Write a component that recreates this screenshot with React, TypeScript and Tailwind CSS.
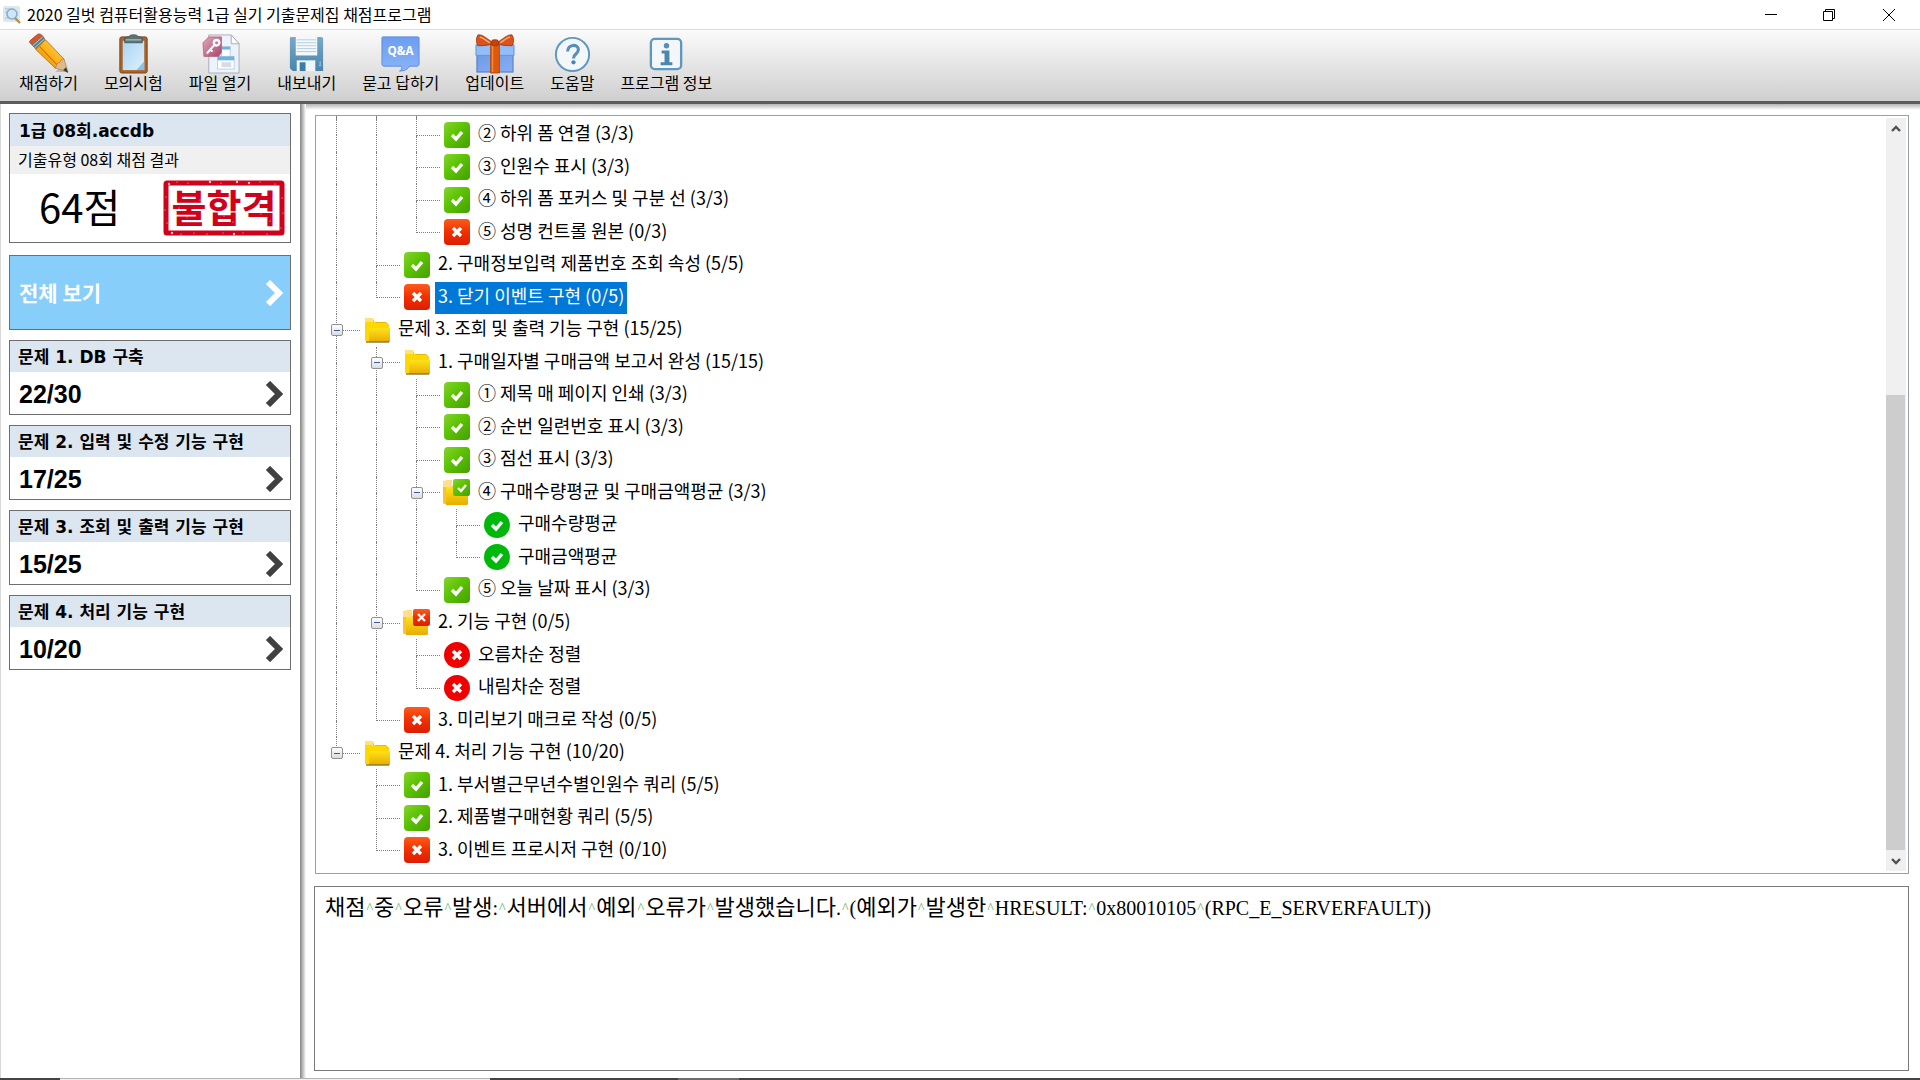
import React, { useState } from "react";
import clsx from "clsx";

type Guide = "line" | "tee" | "end" | "blank";
type IconKind =
  | "pass"
  | "fail"
  | "folder"
  | "folderPass"
  | "folderFail"
  | "roundPass"
  | "roundFail";

interface TreeRow {
  guides: Guide[];
  icon: IconKind;
  label: string;
}

const treeRows: TreeRow[] = [
  { guides: ["line", "line", "tee"], icon: "pass", label: "② 하위 폼 연결 (3/3)" },
  { guides: ["line", "line", "tee"], icon: "pass", label: "③ 인원수 표시 (3/3)" },
  { guides: ["line", "line", "tee"], icon: "pass", label: "④ 하위 폼 포커스 및 구분 선 (3/3)" },
  { guides: ["line", "line", "end"], icon: "fail", label: "⑤ 성명 컨트롤 원본 (0/3)" },
  { guides: ["line", "tee"], icon: "pass", label: "2. 구매정보입력 제품번호 조회 속성 (5/5)" },
  { guides: ["line", "end"], icon: "fail", label: "3. 닫기 이벤트 구현 (0/5)" },
  { guides: ["tee"], icon: "folder", label: "문제 3. 조회 및 출력 기능 구현 (15/25)" },
  { guides: ["line", "tee"], icon: "folder", label: "1. 구매일자별 구매금액 보고서 완성 (15/15)" },
  { guides: ["line", "line", "tee"], icon: "pass", label: "① 제목 매 페이지 인쇄 (3/3)" },
  { guides: ["line", "line", "tee"], icon: "pass", label: "② 순번 일련번호 표시 (3/3)" },
  { guides: ["line", "line", "tee"], icon: "pass", label: "③ 점선 표시 (3/3)" },
  { guides: ["line", "line", "tee"], icon: "folderPass", label: "④ 구매수량평균 및 구매금액평균 (3/3)" },
  { guides: ["line", "line", "line", "tee"], icon: "roundPass", label: "구매수량평균" },
  { guides: ["line", "line", "line", "end"], icon: "roundPass", label: "구매금액평균" },
  { guides: ["line", "line", "end"], icon: "pass", label: "⑤ 오늘 날짜 표시 (3/3)" },
  { guides: ["line", "tee"], icon: "folderFail", label: "2. 기능 구현 (0/5)" },
  { guides: ["line", "line", "tee"], icon: "roundFail", label: "오름차순 정렬" },
  { guides: ["line", "line", "end"], icon: "roundFail", label: "내림차순 정렬" },
  { guides: ["line", "end"], icon: "fail", label: "3. 미리보기 매크로 작성 (0/5)" },
  { guides: ["end"], icon: "folder", label: "문제 4. 처리 기능 구현 (10/20)" },
  { guides: ["blank", "tee"], icon: "pass", label: "1. 부서별근무년수별인원수 쿼리 (5/5)" },
  { guides: ["blank", "tee"], icon: "pass", label: "2. 제품별구매현황 쿼리 (5/5)" },
  { guides: ["blank", "end"], icon: "fail", label: "3. 이벤트 프로시저 구현 (0/10)" },
];

const sections = [
  { title: "문제 1. DB 구축", score: "22/30" },
  { title: "문제 2. 입력 및 수정 기능 구현", score: "17/25" },
  { title: "문제 3. 조회 및 출력 기능 구현", score: "15/25" },
  { title: "문제 4. 처리 기능 구현", score: "10/20" },
];

const errorMessage =
  "채점 중 오류 발생: 서버에서 예외 오류가 발생했습니다. (예외가 발생한 HRESULT: 0x80010105 (RPC_E_SERVERFAULT))";

/* ---------- toolbar icons ---------- */

const PencilIcon = () => (
  <svg viewBox="0 0 42 42" className="size-[41px]">
    <defs>
      <linearGradient id="pencilBody" x1="0" y1="1" x2="1" y2="0">
        <stop offset="0" stopColor="#e07c00" />
        <stop offset=".5" stopColor="#ffb21a" />
        <stop offset="1" stopColor="#ffd76a" />
      </linearGradient>
    </defs>
    <path d="M28 40 34 34l7 6z" fill="#000" opacity=".18" />
    <path d="M2 8 9 2c2-2 4-1 6 1l2 3-10 9-4-4c-1-1-2-2-1-3z" fill="#d9532c" stroke="#a93a1a" strokeWidth=".8" />
    <path d="m4 12 10-9 4 4L8 17z" fill="#5f7f86" />
    <path d="m5 13 10-9M7 15l10-9" stroke="#b9cdd0" strokeWidth="1" />
    <path d="M8 17 18 7l19 20-3 6-6 3z" fill="url(#pencilBody)" stroke="#b56a00" strokeWidth=".8" />
    <path d="m12 14 20 21" stroke="#c97a00" strokeWidth="1.2" />
    <path d="m28 36 2-5 3-1 1-3 3 0 4 13z" fill="#dfb98c" stroke="#9c7346" strokeWidth=".6" />
    <path d="m36 38 3-3 2 6z" fill="#3a3a42" />
  </svg>
);

const ClipboardIcon = () => (
  <svg viewBox="0 0 42 42" className="size-[41px]">
    <defs>
      <linearGradient id="clipPaper" x1="0" y1="0" x2="1" y2="1">
        <stop offset="0" stopColor="#a9d4f5" />
        <stop offset="1" stopColor="#def0fc" />
      </linearGradient>
    </defs>
    <rect x="7" y="4" width="28" height="37" rx="2" fill="#a9642a" stroke="#7c451a" />
    <rect x="10" y="8" width="22" height="30" fill="url(#clipPaper)" />
    <path d="M32 29v9h-8z" fill="#8fbfe4" />
    <path d="M12 10V6c0-1 1-2 2-2h2c1-3 9-3 10 0h2c1 0 2 1 2 2v4z" fill="#5b7376" stroke="#3d5254" strokeWidth=".8" />
    <path d="M13 7h16" stroke="#9db4b6" strokeWidth="1.5" />
  </svg>
);

const AccessFileIcon = () => (
  <svg viewBox="0 0 42 42" className="size-[41px]">
    <defs>
      <linearGradient id="accessTile" x1="0" y1="0" x2="1" y2="1">
        <stop offset="0" stopColor="#e3a9ba" />
        <stop offset="1" stopColor="#a8456a" />
      </linearGradient>
    </defs>
    <path d="M9 2h23l8 9v30H9z" fill="#eef2fb" stroke="#a9aebb" />
    <path d="M32 2v9h8z" fill="#fff" stroke="#a9aebb" />
    <rect x="22" y="14" width="9" height="10" fill="#fff" stroke="#b9d2e8" />
    <rect x="22" y="14" width="9" height="3" fill="#6fb4df" />
    <rect x="18" y="24" width="17" height="13" fill="#fff" stroke="#b9d2e8" />
    <rect x="18" y="24" width="17" height="4" fill="#6fb4df" />
    <rect x="22" y="30" width="10" height="5" fill="#d9dbe2" />
    <path d="M3 10 9 4h13v16l-3 4H4z" fill="url(#accessTile)" stroke="#b4607c" strokeWidth=".8" />
    <circle cx="17" cy="10" r="2.8" fill="none" stroke="#fff" strokeWidth="2.4" />
    <path d="m15 12-8 9M10 17l3 2" stroke="#fff" strokeWidth="2" fill="none" />
  </svg>
);

const FloppyIcon = () => (
  <svg viewBox="0 0 42 42" className="size-[41px]">
    <defs>
      <linearGradient id="floppyBody" x1="0" y1="0" x2="0" y2="1">
        <stop offset="0" stopColor="#7aa9c9" />
        <stop offset="1" stopColor="#4884ac" />
      </linearGradient>
    </defs>
    <path d="M5 4h31c1 0 2 1 2 2v33H7l-3-3V6c0-1 0-2 1-2z" fill="url(#floppyBody)" />
    <rect x="10" y="4" width="22" height="19" fill="#f3f8fb" />
    <path d="M11 7h20M11 10h20M11 13h20M11 16h20M11 19h20" stroke="#b4cddd" strokeWidth="1" />
    <rect x="11" y="28" width="19" height="11" fill="#eff6fa" />
    <rect x="14" y="30" width="6" height="9" fill="#3f7ba3" />
    <path d="M35 29v5m-1-1 1 1 1-1" stroke="#a8cbe0" />
  </svg>
);

const QnaIcon = () => (
  <svg viewBox="0 0 42 42" className="size-[41px]">
    <defs>
      <linearGradient id="qnaBubble" x1="0" y1="0" x2="0" y2="1">
        <stop offset="0" stopColor="#6c9df0" />
        <stop offset="1" stopColor="#8ab4f8" />
      </linearGradient>
    </defs>
    <path d="M3 4h36c1 0 1 1 1 1v27c0 1-1 2-2 2h-8c-1 3-5 5-10 5 2-1 3-3 2-5H4c-1 0-2-1-2-2V5c0-1 1-1 1-1z" fill="url(#qnaBubble)" stroke="#5c8ce0" />
    <text x="21" y="23" textAnchor="middle" fontSize="12" fontWeight="700" fontFamily="'Open Sans', sans-serif" fill="#fff">
      Q&amp;A
    </text>
  </svg>
);

const GiftIcon = () => (
  <svg viewBox="0 0 42 42" className="size-[41px]">
    <defs>
      <linearGradient id="giftBox" x1="0" y1="0" x2="1" y2="1">
        <stop offset="0" stopColor="#6f9be6" />
        <stop offset="1" stopColor="#86aef2" />
      </linearGradient>
    </defs>
    <rect x="3" y="22" width="37" height="18" fill="url(#giftBox)" stroke="#4f76c2" />
    <path d="M2 12h39v11H2z" fill="#92bdf8" stroke="#6a93d8" />
    <path d="M17 12h9v29h-9z" fill="#e0580a" stroke="#ad3f05" strokeWidth=".8" />
    <path d="M19 12v28" stroke="#f58a3c" strokeWidth="1.5" />
    <path d="M20 10C14 7 9 1 4 2c-2 3-2 8 0 11 6 0 11 0 16-3zM23 10c6-3 11-9 16-8 2 3 2 8 0 11-6 0-11 0-16-3z" fill="#d9531a" stroke="#96330a" strokeWidth=".8" />
    <path d="M6 4c4 1 7 4 10 6M37 4c-4 1-7 4-10 6" stroke="#f8a878" strokeWidth="1.6" fill="none" />
    <rect x="18" y="7" width="7" height="6" rx="2" fill="#c6430c" stroke="#96330a" strokeWidth=".8" />
  </svg>
);

const HelpIcon = () => (
  <svg viewBox="0 0 42 42" className="size-[41px]">
    <circle cx="21" cy="22" r="17" fill="#f3f7fa" stroke="#5f97bf" strokeWidth="2" />
    <path d="M16 19c0-8 11-8 11-2 0 5-5 4-5 9" fill="none" stroke="#5690b8" strokeWidth="3.2" />
    <circle cx="22" cy="30" r="2.2" fill="#4a86b0" />
  </svg>
);

const InfoIcon = () => (
  <svg viewBox="0 0 42 42" className="size-[41px]">
    <rect x="5" y="6" width="31" height="31" rx="4" fill="#f3f7fa" stroke="#5f97bf" strokeWidth="2.4" />
    <circle cx="21" cy="13" r="2.8" fill="#5690b8" />
    <path d="M16 18h8v12h3v3H15v-3h4v-9h-3z" fill="#4a86b0" />
  </svg>
);

const toolbarItems = [
  { label: "채점하기", Icon: PencilIcon },
  { label: "모의시험", Icon: ClipboardIcon },
  { label: "파일 열기", Icon: AccessFileIcon },
  { label: "내보내기", Icon: FloppyIcon },
  { label: "묻고 답하기", Icon: QnaIcon },
  { label: "업데이트", Icon: GiftIcon },
  { label: "도움말", Icon: HelpIcon },
  { label: "프로그램 정보", Icon: InfoIcon },
];

/* ---------- tree ---------- */

const CHECK = "m8 13 4 4 6-7";
const CROSS = "m9 9 8 8m0-8-8 8";

function StatusIcon({ kind }: { kind: IconKind }) {
  const passed = kind === "pass" || kind === "folderPass" || kind === "roundPass";
  const mark = passed ? CHECK : CROSS;

  if (kind === "pass" || kind === "fail") {
    return (
      <svg viewBox="0 0 26 26" className="size-[26px]">
        <rect width="26" height="26" rx="4" fill={passed ? "url(#greenTile)" : "url(#redTile)"} />
        <path d={mark} fill="none" stroke="#fff" strokeWidth="3.4" />
      </svg>
    );
  }
  if (kind === "roundPass" || kind === "roundFail") {
    return (
      <svg viewBox="0 0 26 26" className="size-[26px]">
        <circle cx="13" cy="13" r="13" fill={passed ? "#00b80a" : "#f00000"} />
        <path d={mark} fill="none" stroke="#fff" strokeWidth="3.4" />
      </svg>
    );
  }
  if (kind === "folder") {
    return (
      <svg viewBox="0 0 26 26" className="size-[26px]">
        <path d="M1 24V1h8l1 4h12l3 3v16z" fill="#e9b800" />
        <path d="M1 6V1h8v5z" fill="#ffe27a" />
        <path d="M1 24V5h10l1 1h10l3 3v3H5v13z" fill="#ffd800" />
        <path d="M5 11h21v14H5z" fill="url(#folderFront)" />
        <path d="M2 25h23" stroke="#8a7434" strokeWidth="1.4" />
      </svg>
    );
  }
  return (
    <svg viewBox="0 0 26 26" className="-ml-px size-[26px] overflow-visible">
      <path d="M0 24V2l9-1v6h16v18H1z" fill="#f5c435" />
      <path d="M0 8V2l9-1v7z" fill="#ffe08a" />
      <path d="M3 8h8v9h14v8l-1 1H3z" fill="url(#folderFront)" />
      <rect x="10" y="0" width="17" height="17" rx="2" fill={passed ? "url(#greenTile)" : "url(#redTile)"} />
      <path d={passed ? "m15 9 3 3 5-6" : "m15 5 7 7m0-7-7 7"} fill="none" stroke="#fff" strokeWidth="2.4" />
    </svg>
  );
}

// Paints shared by every icon of the tree
const TreePaints = () => (
  <svg width="0" height="0" className="absolute" aria-hidden="true">
    <defs>
      <linearGradient id="greenTile" x1="0" y1="0" x2="1" y2="1">
        <stop offset="0" stopColor="#86d330" />
        <stop offset=".4" stopColor="#5fc505" />
        <stop offset="1" stopColor="#43a000" />
      </linearGradient>
      <linearGradient id="redTile" x1="0" y1="0" x2="0" y2="1">
        <stop offset="0" stopColor="#ff5a1c" />
        <stop offset=".5" stopColor="#f03000" />
        <stop offset="1" stopColor="#dc1e00" />
      </linearGradient>
      <linearGradient id="folderFront" x1="0" y1="0" x2="0" y2="1">
        <stop offset="0" stopColor="#ffe11a" />
        <stop offset="1" stopColor="#e8ac00" />
      </linearGradient>
    </defs>
  </svg>
);

function GuideCell({ guide, connector }: { guide: Guide; connector?: boolean }) {
  return (
    <span className={clsx("flex shrink-0 flex-col self-stretch pl-[19px]", connector ? "w-[43px]" : "w-[40px]")}>
      <span
        className={clsx(
          "flex-1 border-dotted border-[#808080]",
          guide !== "blank" && "border-l",
          (guide === "tee" || guide === "end") && "border-b"
        )}
      />
      <span className={clsx("flex-1 border-dotted border-[#808080]", (guide === "line" || guide === "tee") && "border-l")} />
    </span>
  );
}

function TreeItem({ row, selected, onSelect }: { row: TreeRow; selected: boolean; onSelect: () => void }) {
  const isFolder = row.icon.startsWith("folder");
  const last = row.guides.length - 1;

  return (
    <li role="treeitem" aria-selected={selected} className="flex min-h-0 flex-1 items-center">
      {row.guides.slice(0, last).map((guide, i) => (
        <GuideCell key={i} guide={guide} />
      ))}
      <span className="relative flex self-stretch">
        <GuideCell guide={row.guides[last]} connector />
        {isFolder && (
          <button
            aria-label="접기"
            className="absolute top-1/2 left-[14px] flex size-[12px] -translate-y-1/2 items-center justify-center rounded-xs border border-[#919191] bg-linear-to-b from-white to-[#dcdcdc]"
          >
            <span className="h-px w-[6px] bg-[#3b5ba9]" />
          </button>
        )}
      </span>
      <span className="w-[35px] shrink-0 pb-px pl-1">
        <StatusIcon kind={row.icon} />
      </span>
      <button
        onClick={onSelect}
        className={clsx(
          "flex items-center self-stretch px-[3px] pb-[6px] text-[18px] leading-6 whitespace-nowrap",
          selected ? "bg-[#0078d7] text-white" : "text-black"
        )}
      >
        {row.label}
      </button>
    </li>
  );
}

const ScrollArrow = ({ d }: { d: string }) => (
  <svg viewBox="0 0 10 8" className="h-[8px] w-[10px]">
    <path d={d} fill="none" stroke="#505050" strokeWidth="2.4" />
  </svg>
);

function ResultTree() {
  const [selected, setSelected] = useState(5);

  return (
    <div className="ml-px flex min-h-0 flex-1 border border-[#9a9fa8] bg-white">
      <TreePaints />
      <div className="flex flex-1 flex-col pb-[6px] pl-px">
        <div className="flex h-[3px]" aria-hidden="true">
          <GuideCell guide="line" />
          <GuideCell guide="line" />
          <GuideCell guide="line" />
        </div>
        <ul role="tree" className="flex min-h-0 flex-1 flex-col">
          {treeRows.map((row, i) => (
            <TreeItem key={i} row={row} selected={i === selected} onSelect={() => setSelected(i)} />
          ))}
        </ul>
      </div>
      <div className="my-[2px] mr-[2px] flex w-[20px] flex-col bg-[#f0f0f0]">
        <button aria-label="위로" className="flex h-[21px] items-center justify-center">
          <ScrollArrow d="m1 6 4-4 4 4" />
        </button>
        <div className="flex flex-1 flex-col justify-end">
          <div className="mr-px h-[64%] bg-[#cdcdcd]" />
        </div>
        <button aria-label="아래로" className="flex h-[21px] items-center justify-center">
          <ScrollArrow d="m1 2 4 4 4-4" />
        </button>
      </div>
    </div>
  );
}

/* ---------- sidebar ---------- */

const Chevron = () => (
  <svg viewBox="0 0 18 26" className="h-[26px] w-[18px]">
    <path d="m3 2 11 11L3 24" fill="none" stroke="currentColor" strokeWidth="6" />
  </svg>
);

// Worn spots in the ink of the stamp
const specks = [
  [6, 4, 2], [14, 2, 1], [25, 3, 1], [47, 2, 2], [58, 3, 1], [74, 2, 2], [86, 3, 2], [97, 2, 1], [112, 4, 1],
  [119, 18, 1], [120, 33, 1], [118, 48, 1], [3, 17, 1], [2, 30, 1], [4, 43, 1], [9, 53, 2], [18, 54, 1],
  [31, 53, 1], [44, 54, 1], [60, 53, 1], [71, 54, 2], [80, 53, 1], [104, 54, 1], [16, 28, 1], [24, 37, 1],
  [33, 41, 1], [40, 31, 1], [37, 20, 1], [52, 24, 1], [61, 36, 1], [70, 42, 1], [66, 19, 1], [91, 22, 1],
  [98, 34, 1], [107, 41, 1], [110, 19, 1], [22, 17, 1], [77, 28, 1],
];

const FailStamp = () => (
  <svg viewBox="0 0 122 56" className="h-[56px] w-[122px] overflow-visible">
    <rect x="3" y="3" width="116" height="50" rx="1" fill="none" stroke="#d0021b" strokeWidth="5" />
    <text
      x="61"
      y="42"
      textAnchor="middle"
      fontSize="38"
      fontWeight="700"
      fontFamily="'Noto Sans CJK KR', sans-serif"
      fill="#d0021b"
    >
      불합격
    </text>
    {specks.map(([x, y, r]) => (
      <circle key={`${x}-${y}`} cx={x} cy={y} r={r * 0.6} fill="#fff" opacity=".75" />
    ))}
  </svg>
);

function SectionCard({ title, score }: { title: string; score: string }) {
  return (
    <button className="flex h-[75px] w-full flex-col border border-[#6e6e6e] bg-white text-left">
      <span className="flex h-[31px] w-full items-center bg-[#dce6f0] px-2 font-['DejaVu_Sans','Noto_Sans_CJK_KR',sans-serif] text-[17px] leading-6 font-bold">
        {title}
      </span>
      <span className="flex w-full flex-1 items-center justify-between pt-px pr-[7px] pl-[9px]">
        <span className="font-['Liberation_Sans',sans-serif] text-[25px] leading-8 font-bold">{score}</span>
        <span className="text-[#404040]">
          <Chevron />
        </span>
      </span>
    </button>
  );
}

function Sidebar() {
  return (
    <aside className="w-[300px] shrink-0 border-l border-[#d8d8d8] bg-white pt-[9px] pr-[9px] pl-2">
      <div className="h-[130px] border border-[#6e6e6e]">
        <h2 className="flex h-[32px] items-center bg-[#dce6f0] px-[9px] pt-[2px] font-['DejaVu_Sans','Noto_Sans_CJK_KR',sans-serif] text-[17px] leading-6 font-bold">
          1급 08회.accdb
        </h2>
        <p className="flex h-[28px] items-center bg-[#f0f0f0] px-2 pb-[2px] text-base">기출유형 08회 채점 결과</p>
        <div className="flex h-[68px] items-center justify-between pr-[5px] pl-[29px]">
          <span className="pb-1 text-[40px] leading-10">64점</span>
          <FailStamp />
        </div>
      </div>
      <div className="mt-3 flex flex-col gap-[10px]">
        <button className="flex h-[75px] w-full items-center justify-between border border-[#6e6e6e] bg-[#87cefa] pr-[7px] pl-[9px] text-[21px] font-bold text-white">
          전체 보기
          <Chevron />
        </button>
        {sections.map((section) => (
          <SectionCard key={section.title} {...section} />
        ))}
      </div>
    </aside>
  );
}

/* ---------- window ---------- */

function TitleBar() {
  return (
    <header className="flex h-[29px] shrink-0 items-center bg-white">
      <svg viewBox="0 0 20 20" className="ml-[2px] size-[20px]">
        <rect x="1" y="1" width="17" height="16" rx="2" fill="#dfe6ec" />
        <path d="M3 4h9M3 7h5M3 13h5" stroke="#a9c3b4" />
        <circle cx="10" cy="9" r="5" fill="#cfe6fa" stroke="#7fb0dc" strokeWidth="1.6" />
        <path d="m13 13 5 5" stroke="#b98d4c" strokeWidth="2.4" />
      </svg>
      <h1 className="ml-[5px] pb-[2px] text-base">2020 길벗 컴퓨터활용능력 1급 실기 기출문제집 채점프로그램</h1>
      <div className="ml-auto flex h-full">
        <button aria-label="최소화" className="flex w-[58px] items-center justify-center">
          <svg viewBox="0 0 12 12" className="size-[12px]">
            <path d="M0 5.5h12" stroke="#000" />
          </svg>
        </button>
        <button aria-label="이전 크기로" className="flex w-[58px] items-center justify-center">
          <svg viewBox="0 0 12 12" className="size-[12px]">
            <path d="M.5 2.5h9v9h-9zM2.5 2V.5h9v9H10" fill="none" stroke="#000" />
          </svg>
        </button>
        <button aria-label="닫기" className="flex w-[62px] items-center justify-center">
          <svg viewBox="0 0 12 12" className="size-[12px]">
            <path d="m0 0 12 12m0-12L0 12" stroke="#000" />
          </svg>
        </button>
      </div>
    </header>
  );
}

function Toolbar() {
  return (
    <nav className="flex h-[75px] shrink-0 items-start gap-[26px] border-t border-b-3 border-t-[#dcdcdc] border-b-[#5c5c5c] bg-linear-to-b from-[#fbfbfb] to-[#cfcfcf] pt-[3px] pl-[19px]">
      {toolbarItems.map(({ label, Icon }) => (
        <button key={label} className="flex flex-col items-center text-base leading-4">
          <Icon />
          {label}
        </button>
      ))}
    </nav>
  );
}

// Hangul runs are set larger than the Latin text around them
const renderWord = (word: string) =>
  word.split(/([가-힣]+)/).map((part, i) =>
    i % 2 ? (
      <span key={i} className="text-[22px]">
        {part}
      </span>
    ) : (
      part
    )
  );

function MessageLog() {
  return (
    <output className="block h-[185px] shrink-0 border border-[#7a7a7a] bg-white px-[10px] py-[7px] font-['Liberation_Serif','Noto_Sans_CJK_KR',serif] text-[20px] leading-7">
      {errorMessage.split(" ").map((word, i) => (
        <React.Fragment key={i}>
          {i > 0 && <span className="px-px align-[2px] text-[14px] leading-4 text-[#4caf50]">^</span>}
          {renderWord(word)}
        </React.Fragment>
      ))}
    </output>
  );
}

export default function App() {
  return (
    <div className="flex h-screen flex-col overflow-hidden bg-white font-['Noto_Sans_CJK_KR',sans-serif] text-black">
      <TitleBar />
      <Toolbar />
      <main className="flex min-h-0 flex-1">
        <Sidebar />
        <div className="w-[6px] shrink-0 bg-linear-to-r from-[#858585] to-white" />
        <section className="flex min-w-0 flex-1 flex-col gap-3 bg-[linear-gradient(#b5b5b5,#ffffff_6px)] pt-[11px] pr-[11px] pb-[7px] pl-2">
          <ResultTree />
          <MessageLog />
        </section>
      </main>
      {/* Edge of the desktop taskbar */}
      <footer className="flex h-[2px] shrink-0 bg-[#444444]">
        <div className="ml-[60px] w-[430px] border-t border-[#b4b4b4] bg-[#f0f0f0]" />
        <div className="ml-[188px] w-[61px] bg-[#6c6c6c]" />
      </footer>
    </div>
  );
}
